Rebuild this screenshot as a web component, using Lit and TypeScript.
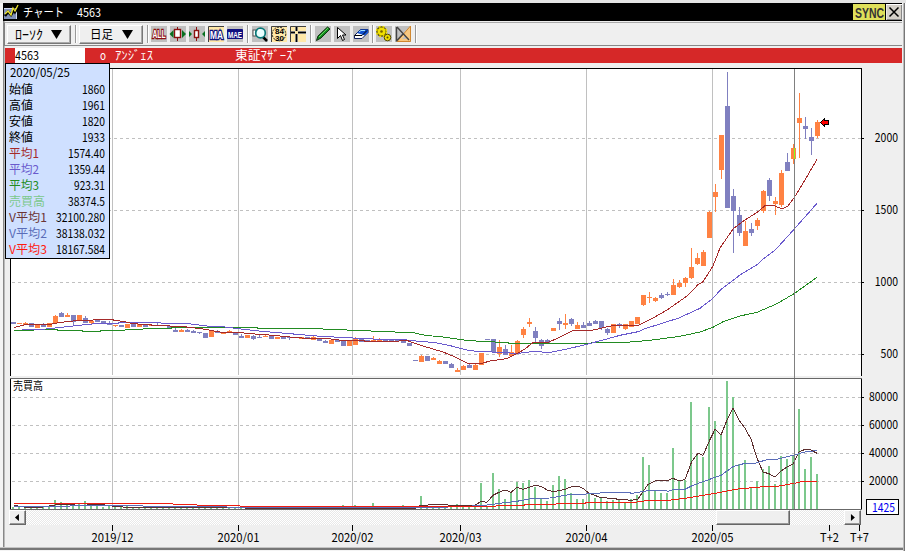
import { LitElement, html, svg, css } from "lit";
import { customElement, property } from "lit/decorators.js";

// Candles: direction, body top, body bottom, optional wick top and wick bottom.
type Candle = [string, number, number, number?, number?];
const UP = "u";
const DN = "d";
const candles: Candle[] = [
  [DN, 322, 324], [UP, 323, 324], [UP, 323, 325, 322], [DN, 323, 327], [UP, 325, 328], [DN, 325, 327, 323],
  [UP, 323, 327], [UP, 316, 323, 315], [DN, 313, 317, 312], [UP, 315, 317, 313], [DN, 315, 322, 315, 325],
  [UP, 315, 320], [DN, 318, 323, 316], [UP, 321, 323, 321, 324], [DN, 320, 322], [DN, 321, 323],
  [DN, 323, 325, 321], [UP, 325, 326, 325, 327], [DN, 325, 327], [UP, 324, 328], [DN, 323, 327],
  [UP, 324, 327], [DN, 324, 327], [UP, 325, 326], [DN, 325, 326, 323], [UP, 325, 326], [DN, 326, 328],
  [DN, 330, 332, 328], [UP, 330, 332, 329], [DN, 330, 332, 329], [DN, 331, 333, 330], [DN, 332, 333, 332, 334],
  [DN, 333, 338], [UP, 331, 337], [DN, 331, 333, 330], [UP, 332, 334], [UP, 331, 332, 330], [DN, 332, 335],
  [DN, 336, 338, 334], [UP, 335, 338], [DN, 336, 339, 335, 340], [DN, 337, 338, 335], [UP, 336, 337, 335],
  [DN, 335, 339], [UP, 337, 339], [DN, 337, 339], [DN, 337, 338, 337, 340], [DN, 337, 338], [UP, 337, 339],
  [DN, 337, 338], [UP, 337, 340, 336], [DN, 338, 341], [DN, 341, 343, 340], [UP, 340, 344], [DN, 340, 342],
  [DN, 341, 346], [UP, 341, 346], [UP, 339, 345, 337], [DN, 339, 342], [DN, 340, 341], [UP, 340, 341, 336],
  [UP, 339, 341, 338], [DN, 340, 341], [DN, 340, 341], [DN, 340, 341], [DN, 339, 343], [DN, 343, 346],
  [DN, 360, 361], [UP, 356, 362, 355], [DN, 356, 361], [UP, 358, 360, 357], [UP, 361, 364, 360],
  [DN, 361, 364], [DN, 364, 368, 363], [UP, 370, 372, 368], [UP, 366, 370, 365], [DN, 365, 368, 364],
  [UP, 365, 370, 364], [UP, 353, 365], [DN, 339, 340], [DN, 339, 352, 339, 353], [UP, 347, 354, 340, 357],
  [DN, 349, 355, 345], [UP, 352, 356, 345], [UP, 341, 354, 340], [UP, 329, 335, 327, 338],
  [UP, 322, 324, 318, 327], [DN, 331, 338, 327, 343], [DN, 340, 346, 339, 349], [DN, 340, 343, 339],
  [UP, 328, 331], [DN, 321, 324, 318, 330], [UP, 323, 325, 314, 329], [DN, 319, 324, 318, 326],
  [UP, 325, 329, 322], [DN, 325, 328, 322], [DN, 323, 326, 321], [DN, 321, 324, 320], [DN, 321, 328, 321, 330],
  [DN, 329, 333, 328, 335], [UP, 324, 333], [DN, 324, 326, 323, 328], [UP, 324, 329, 324, 330],
  [UP, 321, 327], [UP, 317, 324], [UP, 295, 305, 295, 306], [UP, 297, 298, 292, 303], [UP, 298, 301, 297, 302],
  [DN, 295, 298, 293, 299], [DN, 294, 295, 292, 296], [UP, 285, 295, 279], [UP, 283, 287, 280, 288],
  [UP, 278, 283, 277, 287], [UP, 267, 278, 248, 279], [UP, 258, 264, 253, 265], [UP, 252, 266, 250],
  [UP, 212, 238, 211], [UP, 192, 197, 184, 212], [UP, 135, 170, 135, 179], [DN, 106, 208, 72],
  [DN, 196, 211, 189, 253], [DN, 215, 233, 207, 236], [UP, 231, 246, 221], [DN, 229, 233, 223, 236],
  [UP, 220, 226, 218, 230], [UP, 191, 211, 190, 213], [DN, 180, 196, 178, 201], [UP, 201, 204, 197, 215],
  [UP, 173, 205, 170, 207], [DN, 162, 171, 153], [UP, 148, 159, 144, 164], [UP, 118, 123, 93, 158],
  [DN, 126, 129, 117, 139], [DN, 137, 141, 128, 155], [UP, 122, 136, 120, 138],
];

const BASE = 509;
// Top edges of the volume bars; the quiet early stretch is filled with low bars.
const early: Record<number, number> = {
  7: 500, 8: 502, 9: 504, 10: 504, 11: 504, 12: 501, 13: 504, 14: 506, 16: 506, 19: 506,
  55: 505, 57: 505, 60: 503, 65: 505, 68: 496, 73: 505, 74: 504, 75: 505,
};
const late = [
  483, 506, 473, 489, 499, 493, 482, 483, 480, 487, 499, 501, 485, 476, 479, 493, 499, 499, 494, 498, 498, 501,
  500, 500, 503, 499, 495, 457, 465, 491, 493, 493, 448, 480, 480, 402, 455, 457, 407, 421, 435, 381, 397, 464,
  460, 487, 481, 469, 466, 484, 456, 459, 455, 409, 469, 457, 474,
];
const volumes = candles.map((_, i) => (i >= 78 ? late[i - 78] : early[i] ?? 507));

const priceLines = [
  {
    color: "#228b22",
    points:
      "14,330.5 55,329.5 60,330.5 82,330.5 83,331.5 99,331.5 102,330.5 124,330.5 126,329.5 142,329.5 144,328.5 170,328.5 173,327.5 257,327.5 258,328.5 322,328.5 324,329.5 346,329.5 348,330.5 370,330.5 372,331.5 394,331.5 396,332.5 413,332.5 425,335.3 443,337 467,340.4 483,341.5 507,342.5 510,343.5 590,343.5 593,342.5 627,342.3 650,340.3 680,336.3 700,332 713,327.3 723,321.7 740,316 757,312.3 777,303.7 794,293.7 817,277.3",
  },
  {
    color: "#6a5acd",
    points:
      "22,329.5 46,329 60,327.4 82,325 97,323.5 118,323.5 119,322.5 160,322.5 162,323.5 190,323.8 200,325.2 210,326.4 221,326.5 233,328 253,330.4 270,332 297,334.3 320,336.3 342,337.4 360,338.4 383,339.5 407,340 420,341.5 433,342.3 450,345.6 467,350 477,351.5 498,352.2 517,353.5 533,351.5 550,352.5 567,349 587,344.3 603,340 620,335.3 638,331.7 645,328.7 678,318.3 700,308.3 713,298.3 720,290.3 740,275 757,264.7 763,259 775,250.3 794,229.3 817,203.3",
  },
  {
    color: "#a52a2a",
    points:
      "14,327.5 22,325.6 26,324.5 50,324.5 60,322.4 75,320.8 92,320.3 95,319.5 112,319.5 115,320.5 125,321.6 131,323.4 143,324.4 157,325.4 183,326.6 195,328 207,329.5 215,331.3 223,332.4 237,332.4 250,333.5 260,334.6 273,335.2 283,336.4 305,338.3 327,338.5 335,339.5 343,340.5 363,340.5 366,341.5 398,341.5 400,340.5 407,340.5 423,346 443,352 455,357 468,363.3 482,363.3 490,361 507,358.5 517,353.5 525,349 533,342.5 548,342.5 558,338 573,330.7 592,330.3 612,325.7 638,325.4 653,318 667,310 687,296 698,284.7 703,281.7 713,266 720,248 733,229 745,220 758,211.7 765,205.7 775,206 782,209 788,206 794,198 802,185 817,159.3",
  },
];

const volumeLines = [
  {
    color: "#5c2e2e",
    points:
      "14,505.5 28,507.5 40,507.5 52,505.5 58,504.5 70,504.5 80,505.5 94,504.5 101,504.5 115,506.4 130,507.5 240,507.5 250,508.5 408,508.4 415,508.3 420,505.7 435,504.4 446,504.4 450,505.7 475,505.4 481,501.3 487,502.3 493,495.3 499,492.3 505,490 511,492.3 517,487.3 523,489.3 535,485.3 541,486.3 547,490 554,491.7 565,489.3 571,487 578,486.3 583,488.3 589,493.3 600,497.3 613,498.7 631,500.3 638,499 643,491.7 648,484.3 655,481 668,480.4 673,478.3 679,481 685,479.4 692,461 698,453.3 703,455.3 709,441.7 715,429.3 721,435 727,420 733,408.3 739,420 745,428.3 751,439 757,458.3 763,472 769,473.7 775,477 781,471 787,467 793,464 799,452 805,449.3 811,450 817,453.3",
  },
  {
    color: "#5a6cb8",
    points:
      "14,506.5 69,506.5 71,505.5 142,505.5 144,506.5 226,506.5 228,507.5 437,507.4 467,506.3 478,505.7 491,504.7 499,503.3 517,501.3 533,498.3 550,498 567,495 583,494.3 593,493.3 608,492.7 627,492.3 632,493.3 642,491.7 650,490.3 664,490.4 668,491.3 673,489.5 685,489.3 692,485.7 703,481.7 721,475.3 733,466.7 745,463.3 755,463.3 768,459.3 777,459.3 794,455 805,452 817,450.5",
  },
  {
    color: "#f01c10",
    points:
      "14,503.5 172,503.5 174,504.5 196,504.5 198,505.5 239,505.5 241,506.5 495,506.5 497,505.5 523,505.5 526,504.5 555,504.5 557,503.5 584,503.5 587,502.5 633,502.5 647,500.6 668,500.4 685,498.3 703,495.3 721,492.3 735,489.3 763,486.7 777,486.3 794,483.4 800,482 817,481.5",
  },
];

const months: [number, string][] = [
  [112, "2019/12"], [238, "2020/01"], [352, "2020/02"], [460, "2020/03"], [586, "2020/04"], [712, "2020/05"],
];
const priceTicks: [number, string][] = [[138, "2000"], [210, "1500"], [282, "1000"], [354, "500"]];
const volumeTicks: [number, string][] = [[397, "80000"], [425, "60000"], [453, "40000"], [481, "20000"]];

const narrow = (text: string, width: number, size = 12, color = "#000") => html`<svg
  class="narrow"
  width=${width}
  height="16"
>
  <text x="0" y="12.500" font-size=${size} fill=${color} textLength=${width} lengthAdjust="spacingAndGlyphs">${text}</text>
</svg>`;

@customElement("price-panel")
export class PricePanel extends LitElement {
  static styles = css`
    :host {
      display: flex;
      flex-direction: column;
      box-sizing: border-box;
      width: 105px;
      height: 196px;
      padding: 0 4px 0 3px;
      background: #cfe0ff;
      border: 1px solid #000;
      font-family: "Noto Sans CJK JP", sans-serif;
    }
    .row {
      display: flex;
      justify-content: space-between;
      height: 16px;
    }
    .date {
      height: 17px;
      padding-left: 1px;
    }
    .narrow {
      display: block;
      overflow: visible;
    }
  `;
  rows: [string, number, string, number, string][] = [
    ["始値", 24, "1860", 23, "#000"],
    ["高値", 24, "1961", 23, "#000"],
    ["安値", 24, "1820", 23, "#000"],
    ["終値", 24, "1933", 23, "#000"],
    ["平均1", 30, "1574.40", 37, "#a52a2a"],
    ["平均2", 30, "1359.44", 37, "#6a5acd"],
    ["平均3", 30, "923.31", 31, "#228b22"],
    ["売買高", 36, "38374.5", 37, "#7cc88c"],
    ["V平均1", 38, "32100.280", 49, "#6b3434"],
    ["V平均2", 38, "38138.032", 49, "#5a6cb8"],
    ["V平均3", 38, "18167.584", 49, "#ff1a10"],
  ];
  render() {
    return html`<div class="row date">${narrow("2020/05/25", 60)}</div>
      ${this.rows.map(
        ([name, w, value, vw, color]) =>
          html`<div class="row">${narrow(name, w, 12, color)}${narrow(value, vw)}</div>`
      )}`;
  }
}

const gray = svg`<rect width="16" height="16" fill="#c0c0c0"/>`;
const pressed = svg`<rect width="16" height="16" fill="#ffe8a8"/><path d="M.500 16V.5H16" fill="none" stroke="#404040"/>`;

const icons: Record<string, unknown> = {
  all: svg`${gray}<text x="1.500" y="12" font-size="10.500" font-weight="700" fill="#fff" stroke="#8b1010" stroke-width="2.600" paint-order="stroke" textLength="13" lengthAdjust="spacingAndGlyphs">ALL</text>`,
  expand: svg`${gray}<path d="M7.500 1v14" stroke="#8b1010"/><rect x="4.500" y="3.500" width="6" height="8" fill="#fff" stroke="#8b1010" stroke-width="1.400"/><path d="M3.500 4L-.5 8l4 4zM12 4l4 4-4 4z" fill="#087020"/>`,
  shrink: svg`${gray}<path d="M7.500 1v14" stroke="#8b1010"/><rect x="5.500" y="4.500" width="4" height="7" fill="#fff" stroke="#8b1010" stroke-width="1.400"/><path d="M0 5l3 3-3 3zM16 5l-3 3 3 3z" fill="#087020"/>`,
  ma: svg`${pressed}<text x="2" y="12.500" font-size="10" font-weight="700" fill="#fff" stroke="#101080" stroke-width="2.600" paint-order="stroke" textLength="13" lengthAdjust="spacingAndGlyphs">MA</text>`,
  mae: svg`${gray}<rect y="3" width="16" height="10" rx="1" fill="#101080"/><text x="1" y="11.500" font-size="9.500" font-weight="700" fill="#fff" textLength="14" lengthAdjust="spacingAndGlyphs">MAE</text>`,
  lens: svg`${gray}<rect x="1" y="4" width="3" height="6" fill="#fff" stroke="#555"/><path d="M11 11l4 4" stroke="#000" stroke-width="2.500"/><circle cx="8.500" cy="7" r="4.800" fill="#e8ffff" stroke="#087878" stroke-width="1.700"/><path d="M6 5l2-1" stroke="#fff" stroke-width="2"/>`,
  digits: svg`${pressed}<circle cx="8" cy="8" r="6.800" fill="none" stroke="#222" stroke-dasharray="2 1"/><text x="4" y="7.500" font-size="6.500" font-weight="700" textLength="9" lengthAdjust="spacingAndGlyphs">84</text><text x="4" y="14.800" font-size="6.500" font-weight="700" textLength="9" lengthAdjust="spacingAndGlyphs">30</text>`,
  cross: svg`${pressed}<path d="M1 6.500h15M6.500 1v15" stroke="#808080" stroke-width="3"/><path d="M1 6.500h15M6.500 1v15" stroke="#000"/><rect x="5" y="5" width="3" height="3" fill="#ffe8a8"/>`,
  pen: svg`${gray}<path d="M1.500 14.500L3 10l9.500-9L15 3 6 12z" fill="#10891c" stroke="#103010"/><path d="M4 11l9-9" stroke="#65d660"/>`,
  arrow: svg`${gray}<path d="M3.500 1.500v11l3-3 2 5 2-1-2-4.500h3.500z" fill="#fff" stroke="#000"/>`,
  eraser: svg`${gray}<path d="M1.500 9.500l6-6h7.500v3l-6 6H1.500z" fill="#fff" stroke="#102060"/><path d="M4 7l3.500-3.500H15v3l-3 3z" fill="#1050d0"/><path d="M1.500 9.500H9l5-5" fill="none" stroke="#000"/><path d="M6 6l2-1.500h4" fill="none" stroke="#a0e0ff"/>`,
  gear: svg`${gray}<circle cx="5.500" cy="5.500" r="4.600" fill="#f0e000" stroke="#554800" stroke-width="1.200"/><circle cx="5.500" cy="5.500" r="5" fill="none" stroke="#f0e000" stroke-width="1.500" stroke-dasharray="2 2"/><circle cx="5.500" cy="5.500" r="1.300" fill="#776000"/><circle cx="11.500" cy="11.500" r="3.300" fill="#f0e000" stroke="#554800"/><circle cx="11.500" cy="11.500" r="1" fill="#554800"/>`,
  ruler: svg`${gray}<path d="M15.500 0v15.500H2z" fill="#f8c880" stroke="#d08830"/><path d="M11 9v4H7z" fill="#c0c0c0"/><path d="M1.500 1v14.500M2 1l12 13M1.500 15L8 8" fill="none" stroke="#444" stroke-width="1.400"/>`,
};

@customElement("tool-bar")
export class ToolBar extends LitElement {
  static styles = css`
    :host {
      display: flex;
      align-items: center;
      box-sizing: border-box;
      height: 24px;
      padding-left: 2px;
      background: #efefef;
      border-bottom: 1px solid #888;
      border-top: 1px solid #aaa;
      border-left: 1px solid #808080;
      font-family: "Noto Sans CJK JP", sans-serif;
    }
    .drop {
      display: flex;
      align-items: center;
      justify-content: space-between;
      box-sizing: border-box;
      width: 64px;
      height: 19px;
      padding: 0 8px 0 7px;
      background: #efefef;
      border: 1px solid;
      border-color: #fff #777 #777 #fff;
      box-shadow: inset -1px -1px #aaa;
    }
    .day {
      padding-left: 10px;
      padding-right: 9px;
    }
    .sep {
      width: 1px;
      height: 18px;
      background: #999;
      border-right: 1px solid #fff;
    }
    .narrow-gap {
      margin: 0 2px 0 4px;
    }
    .wide-gap {
      margin: 0 3px 0 4px;
    }
    .tight-gap {
      margin: 0 2px 0 3px;
    }
    .icons {
      display: flex;
      gap: 3px;
    }
    .icon,
    .narrow {
      display: block;
      overflow: visible;
    }
    .icon {
      font-family: "Liberation Sans", sans-serif;
    }
  `;
  group(names: string[]) {
    return html`<div class="icons">
      ${names.map((n) => html`<svg class="icon" width="16" height="16">${icons[n]}</svg>`)}
    </div>`;
  }
  render() {
    const tri = html`<svg width="11" height="9"><path d="M0 0h11L5.500 9z" /></svg>`;
    return html`<div class="drop">${narrow("ﾛｰｿｸ", 28, 13)}${tri}</div>
      <div class="sep narrow-gap"></div>
      <div class="drop day">${narrow("日足", 23, 12.5)}${tri}</div>
      <div class="sep narrow-gap"></div>
      ${this.group(["all", "expand", "shrink", "ma", "mae"])}
      <div class="sep wide-gap"></div>
      ${this.group(["lens", "digits", "cross"])}
      <div class="sep wide-gap"></div>
      ${this.group(["pen", "arrow", "eraser"])}
      <div class="sep tight-gap"></div>
      ${this.group(["gear", "ruler"])}
      <div class="sep wide-gap"></div>`;
  }
}

@customElement("price-chart")
export class PriceChart extends LitElement {
  static styles = css`
    :host,
    svg {
      display: block;
    }
    text {
      font-family: "Noto Sans CJK JP", sans-serif;
      font-size: 12px;
    }
    .caption {
      font-size: 11px;
    }
    .crisp {
      shape-rendering: crispEdges;
    }
  `;
  candle([dir, top, bottom, high, low]: Candle, i: number) {
    const x = 13 + i * 6;
    const color = dir === UP ? "#ff8243" : "#8080c0";
    const h = high ?? top;
    const left = i === 0 ? 11 : x - 2;
    return svg`<rect x=${x} y=${h} width="1" height=${(low ?? bottom) - h} fill=${color}/>
      <rect x=${left} y=${top} width=${x + 3 - left} height=${bottom - top} fill=${color}/>`;
  }
  tick([y, label]: [number, string]) {
    const w = label.length * 5.8;
    return svg`<rect x="861" y=${y} width="3" height="1"/>
      <text x=${898 - w} y=${y + 4} textLength=${w} lengthAdjust="spacingAndGlyphs">${label}</text>`;
  }
  line(l: { color: string; points: string }) {
    return svg`<polyline points=${l.points} fill="none" stroke=${l.color}/>`;
  }
  render() {
    return html`<svg width="897" height="447" viewBox="5 63 897 447">
      <g class="crisp">
        <rect x="10" y="68" width="852" height="308" fill="#fff" />
        <rect x="10" y="378" width="852" height="132" fill="#fff" />
        ${[...priceTicks, ...volumeTicks].map(
          ([y]) => svg`<path d="M12 ${y + 0.5}H861" stroke="#c0c0c0" stroke-dasharray="3 3"/>`
        )}
        ${months.map(([x]) => svg`<path d="M${x + 0.5} 69V375M${x + 0.5} 379V509" stroke="#c0c0c0"/>`)}
        ${volumes.map((y, i) => svg`<rect x=${12 + i * 6} y=${y} width="2" height=${BASE - y} fill="#7cc88c"/>`)}
        ${candles.map((c, i) => this.candle(c, i))}
        ${priceLines.map(this.line)} ${volumeLines.map(this.line)}
        <path d="M794.500 69V509" stroke="#808080" />
        <rect x="794" y="148" width="1" height="11" fill="#80ff20" />
        <path d="M820 122h1v-1h1v-1h1v-1h1v-1h1v2h4v5h-4v2h-1v-1h-1v-1h-1v-1h-1v-1h-1z" />
        <path d="M821 122h1v-1h1v-1h1v1h4v3h-4v1h-1v-1h-1v-1h-1z" fill="#f00" />
        <path d="M10.500 376V68.500H861.500V376M10.500 378V509M861.500 378V510" fill="none" stroke="#000" />
        <path d="M10 378.500H862M10 509.500H862" stroke="#686868" />
      </g>
      ${[...priceTicks, ...volumeTicks].map((t) => this.tick(t))}
      <text class="caption" x="13" y="390" textLength="30" lengthAdjust="spacingAndGlyphs">売買高</text>
    </svg>`;
  }
}

@customElement("app-root")
export class AppRoot extends LitElement {
  @property() code = "4563";
  static styles = css`
    :host {
      display: flex;
      flex-direction: column;
      box-sizing: border-box;
      width: 906px;
      height: 551px;
      padding: 0 0 0 3px;
      background: #efefef;
      border-top: 3px solid #e4e4e4;
      position: relative;
      overflow: hidden;
      font-family: "Noto Sans CJK JP", sans-serif;
      box-shadow: inset -1px 0 #fff, inset -2px 0 #777, inset -3px 0 #bbb, inset 0 -1px #f4f4f4,
        inset 0 -3px #777, inset 0 -4px #c4c4c4, inset 3px 0 #f4f4f4, inset 4px 0 #888, inset 5px 0 #bbb;
    }
    .title {
      display: flex;
      align-items: center;
      width: 899px;
      height: 18px;
      background: #000;
    }
    .logo {
      margin: 0 4px 0 1px;
    }
    .num {
      margin-left: 13px;
      flex: 1;
    }
    .title .narrow {
      margin-top: -1px;
    }
    .narrow {
      display: block;
      overflow: visible;
    }
    .sync {
      display: flex;
      align-items: center;
      justify-content: center;
      width: 32px;
      height: 16px;
      margin-right: 1px;
      background: #dfe05a;
    }
    .close {
      display: block;
      background: #d4d0c8;
    }
    .tools {
      width: 898px;
      margin-left: 1px;
      margin-top: 1px;
    }
    .band {
      display: flex;
      align-items: center;
      width: 897px;
      height: 15px;
      margin: 2px 0 0 2px;
      background: #d62828;
    }
    .band .narrow {
      margin-top: -1px;
    }
    .code {
      width: 70px;
      height: 15px;
      margin-left: 10px;
      margin-right: 15px;
      background: #fff;
    }
    .name {
      margin-left: 9px;
      margin-right: 82px;
    }
    .chart {
      margin-left: 2px;
    }
    .scroll {
      display: flex;
      width: 852px;
      height: 15px;
      margin-left: 6px;
      background: repeating-conic-gradient(#fff 0 25%, #e8e8e8 0 50%) 0 0 / 2px 2px;
    }
    .btn {
      display: block;
      box-sizing: border-box;
      background: #efefef;
      border: 1px solid;
      border-color: #fff #666 #666 #fff;
      box-shadow: inset -1px -1px #999;
    }
    .arrow {
      width: 17px;
    }
    .thumb {
      width: 75px;
      margin-left: 690px;
      margin-right: 54px;
    }
    .axis {
      display: block;
      margin-left: 2px;
    }
    .panel {
      position: absolute;
      left: 5px;
      top: 60px;
    }
    .last {
      position: absolute;
      left: 866px;
      top: 496px;
      box-sizing: border-box;
      width: 33px;
      height: 16px;
      padding-left: 5px;
      background: #fff;
      border: 1px solid #000;
    }
    .last .narrow {
      margin-top: -1px;
    }
  `;
  axisLabel(x: number, text: string, width: number) {
    return svg`<rect x=${x} y="525" width="1" height="6"/>
      <text x=${x + 0.5 - width / 2} y="542" font-size="12" textLength=${width} lengthAdjust="spacingAndGlyphs">${text}</text>`;
  }
  render() {
    return html`<div class="title">
        <svg class="logo" width="15" height="16">
          <rect y="4" width="13" height="11" fill="#8090b8" />
          <path d="M0 4.500h12.500V15" fill="none" stroke="#d0d8f0" />
          <path d="M1 12l3-4 3 3 3-5 1 2 4-6" fill="none" stroke="#000" stroke-width="2.500" />
          <path d="M1 10l3-3 3 4 2-7 2 3 3-6" fill="none" stroke="#f0e830" stroke-width="1.300" />
        </svg>
        ${narrow("チャート", 41, 12, "#fff")}
        <div class="num">${narrow(this.code, 24, 12, "#fff")}</div>
        <div class="sync">
          <svg class="narrow" width="28" height="14">
            <text x="0" y="12.500" font-family="Liberation Sans" font-size="14" font-weight="700" fill="#333" textLength="29" lengthAdjust="spacingAndGlyphs">SYNC</text>
          </svg>
        </div>
        <svg class="close" width="16" height="16">
          <path d="M0 15.500V.5h16" fill="none" stroke="#fff" />
          <path d="M15.500 1v14.500H1" fill="none" stroke="#888" />
          <path d="M3.500 3.500l9 9m0-9l-9 9" stroke="#000" stroke-width="1.500" />
        </svg>
      </div>
      <tool-bar class="tools"></tool-bar>
      <div class="band">
        <div class="code">${narrow(this.code, 24)}</div>
        ${narrow("o", 6, 12, "#fff")}
        <div class="name">${narrow("ｱﾝｼﾞｪｽ", 38, 12, "#fff")}</div>
        ${narrow("東証ﾏｻﾞｰｽﾞ", 64, 12, "#fff")}
      </div>
      <price-chart class="chart"></price-chart>
      <div class="scroll">
        <svg class="btn arrow" viewBox="0 0 15 13"><path d="M9 3v7L5 6.500z" /></svg>
        <div class="btn thumb"></div>
        <svg class="btn arrow" viewBox="0 0 15 13"><path d="M6 3v7l4-3.500z" /></svg>
      </div>
      <svg class="axis" width="897" height="22" viewBox="5 525 897 22">
        ${months.map(([x, label]) => this.axisLabel(x, label, 42))} ${this.axisLabel(829, "T+2", 19)}
        ${this.axisLabel(859, "T+7", 19)}
      </svg>
      <price-panel class="panel"></price-panel>
      <div class="last">${narrow("1425", 23, 12, "#0000f0")}</div>`;
  }
}
